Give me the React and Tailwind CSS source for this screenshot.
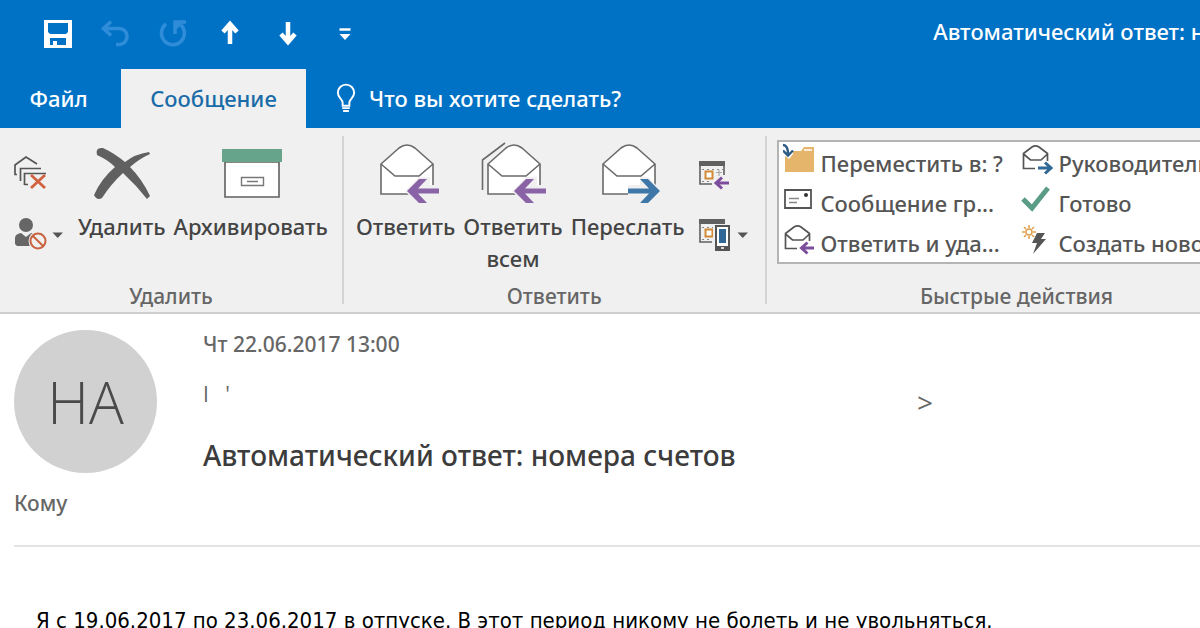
import React from 'react';

const ENVELOPE = 'M8 22 L26 6 Q34 0 42 6 L60 22 V52 H8 Z';

function Caret() {
  return (
    <svg width="12" height="7" viewBox="0 0 12 7">
      <path d="M0.5 0.5h10.5L5.7 6z" fill="#555" />
    </svg>
  );
}

function QuickButton({ label, children }) {
  return (
    <button aria-label={label} className="flex w-[58px] h-12 items-center justify-center">
      <svg width="32" height="32" viewBox="0 0 32 32" fill="none" stroke="#fff">
        {children}
      </svg>
    </button>
  );
}

function BigButton({ icon, children }) {
  return (
    <button className="flex flex-col items-center gap-1">
      <svg width="66" height="64" viewBox="0 0 66 64" fill="none">
        {icon}
      </svg>
      <span className="whitespace-pre-line text-center leading-8">{children}</span>
    </button>
  );
}

function LargeEnvelope({ forward, all }) {
  return (
    <>
      {all && <path d="M2.5 48V18L25 1" stroke="#6a6a6a" strokeWidth="1.6" />}
      <path d={ENVELOPE} fill="#fff" stroke="#6a6a6a" strokeWidth="1.6" />
      <path d="M8 22l14 12h24l14-12" stroke="#6a6a6a" strokeWidth="1.6" />
      {forward ? (
        <>
          <path d="M33 43h12V35h8l14 14-14 15h-8V55H33z" fill="#f0f0f0" />
          <path d="M33 46.5h21l-9-9.5h8l12 12-12 12h-8l9-9.5H33z" fill="#3f78a8" />
        </>
      ) : (
        <>
          <path d="M66 43h-9V35H46L32 49l14 15h10V56h10z" fill="#f0f0f0" />
          <path d="M66 46.5H45l9-9.5h-8L34 49l12 12h8l-9-9.5h21z" fill="#8a62a6" />
        </>
      )}
    </>
  );
}

function CalendarGrid() {
  return (
    <>
      <path d="M2 1h26v5H2z" fill="#606060" />
      <path d="M3 6v18h12M27 6v9" stroke="#606060" strokeWidth="1.6" />
      <path d="M5 9.5h21M5 21.5h10" stroke="#888" strokeWidth="1.2" strokeDasharray="2 3" />
      <rect x="8.5" y="11.5" width="7" height="7" stroke="#d08a35" strokeWidth="2" fill="#fff" />
      <path d="M19 12.5h6M22 10v6" stroke="#aaa" strokeWidth="1.2" />
    </>
  );
}

function Group({ title, className = '', children }) {
  return (
    <section aria-label={title} className={`flex shrink-0 flex-col justify-between ${className}`}>
      <div className="flex">{children}</div>
      <h2 className="text-center text-[21px] leading-4 text-[#666]">{title}</h2>
    </section>
  );
}

function QuickStep({ icon, children }) {
  return (
    <button className="flex h-10 items-center gap-1.5 pl-1 pt-0.5 text-left">
      <svg width="32" height="32" viewBox="0 0 32 32" fill="none" className="-mt-2 shrink-0">
        {icon}
      </svg>
      <span className="whitespace-nowrap">{children}</span>
    </button>
  );
}

function SmallEnvelope({ forward }) {
  return (
    <>
      <path d="M14 25.5H2.5V10.5L11 4q3.5-2.4 7 0l8.5 6.5V18M2.5 11l7 6H20l6.5-6" stroke="#555" strokeWidth="1.7" />
      {forward ? (
        <path d="M17 25h12M24 19.5l6 5.5-6 5.5" stroke="#2f6797" strokeWidth="3" />
      ) : (
        <path d="M31 25H19M24.5 19.5L18.5 25l6 5.5" stroke="#7c4d9c" strokeWidth="3" />
      )}
    </>
  );
}

function TitleBar() {
  return (
    <div className="grid grid-cols-[7fr_2fr] items-center py-[9px]">
      <div className="flex pl-7">
        <QuickButton label="Сохранить">
          <path d="M3 3h28v28H3z M7 6v9l2 2h16l2-2V6z M9 21v7h3v-4h4v4h9v-7z" fill="#fff" fillRule="evenodd" stroke="none" />
        </QuickButton>
        <QuickButton label="Отменить">
          <path d="M12 4.5L4.5 11.5 12 18.5M5 11.5h14a8 8 0 0 1 2 16h-4" stroke="#2f8cd8" strokeWidth="3.5" />
        </QuickButton>
        <QuickButton label="Повторить">
          <path d="M9 7A11.5 11.5 0 1 0 24 8" stroke="#2f8cd8" strokeWidth="3.5" />
          <path d="M18 17V5h11" stroke="#2f8cd8" strokeWidth="3.5" />
          <path d="M18 5h9l-9 9z" fill="#2f8cd8" stroke="none" />
        </QuickButton>
        <QuickButton label="Предыдущий элемент">
          <path d="M15 27V8M8 15l7-8 7 8" strokeWidth="4.5" />
        </QuickButton>
        <QuickButton label="Следующий элемент">
          <path d="M15 5v19M8 17l7 8 7-8" strokeWidth="4.5" />
        </QuickButton>
        <QuickButton label="Настройка панели быстрого доступа">
          <path d="M8.5 12.5h11" strokeWidth="2.5" />
          <path d="M8.5 17h11L14 23z" fill="#fff" stroke="none" />
        </QuickButton>
      </div>
      <h1 className="-mt-1 overflow-hidden whitespace-nowrap">
        Автоматический ответ: номера счетов
      </h1>
    </div>
  );
}

function Tabs() {
  return (
    <nav className="flex h-[62px] items-end">
      <button className="h-[59px] w-[117px] text-center">Файл</button>
      <button className="ml-1 h-[59px] w-[185px] bg-[#f0f0f0] text-[#1a6ca8]">Сообщение</button>
      <label className="ml-7 flex h-[59px] flex-1 items-center gap-3">
        <svg width="24" height="32" viewBox="0 0 24 32" fill="none" stroke="#fff" strokeWidth="2">
          <path d="M9 23v-3c0-4-5-5-5-10.5a8.5 8.5 0 0 1 17 0C21 15 16 16 16 20v3zM8.5 25.5h8M9.5 28.5h6" />
        </svg>
        <input
          type="text"
          aria-label="Что вы хотите сделать?"
          placeholder="Что вы хотите сделать?"
          className="w-full bg-transparent outline-none placeholder:text-white"
        />
      </label>
    </nav>
  );
}

function Ribbon() {
  return (
    <div className="flex h-[186px] overflow-hidden border-b-2 border-[#cfcfcf] bg-[#f0f0f0] pt-2 text-[#444]">
      <Group title="Удалить" className="mb-2 border-r-2 border-[#d4d4d4] px-3.5">
        <div className="mr-3.5 mt-5 flex w-[50px] flex-col gap-7">
          <button aria-label="Пропустить">
            <svg width="34" height="34" viewBox="0 0 34 34" fill="none" stroke="#555" strokeWidth="1.7">
              <path d="M3 18.5h-2V9L12 1l11 7M6.5 25V12.5H27M10.5 28.5H14M10.5 29V17.5H32" />
              <path d="M17 19l14 13M31 19L17 32" stroke="#d2623f" strokeWidth="2.8" />
            </svg>
          </button>
          <button aria-label="Нежелательная почта" className="flex items-center justify-between">
            <svg width="34" height="34" viewBox="0 0 34 34" fill="none">
              <circle cx="12" cy="7" r="7" fill="#666" />
              <path d="M1 26V20q0-4 6-5l5 4 5-4q5 1 6 5l-7 8H3z" fill="#666" />
              <circle cx="24" cy="23" r="9.5" fill="#f0f0f0" />
              <circle cx="24" cy="23" r="7.5" stroke="#c8623f" strokeWidth="2" />
              <path d="M18.5 17.5l11 11" stroke="#c8623f" strokeWidth="2" />
            </svg>
            <Caret />
          </button>
        </div>
        <div className="flex items-start gap-2 pt-1.5">
          <BigButton
            icon={
              <path
                d="M14 6Q25 11 36 20Q46 12 60 10L61 12Q50 17 41 25Q53 37 61 54L58 57Q47 43 34 31Q22 42 13 56Q8 59 5 53Q12 37 26 25Q19 18 8 13Q6 5 14 6z"
                fill="#606060"
              />
            }
          >
            Удалить
          </BigButton>
          <BigButton
            icon={
              <>
                <path d="M7 20h54v35H7z" fill="#fff" stroke="#606060" strokeWidth="1.6" />
                <path d="M4 7h60v13H4z" fill="#66a48b" />
                <path d="M23.5 35.5h22v8h-22zM29 39.5h11" stroke="#777" strokeWidth="1.4" />
              </>
            }
          >
            Архивировать
          </BigButton>
        </div>
      </Group>

      <Group title="Ответить" className="mb-2 border-r-2 border-[#d4d4d4] px-3">
        <div className="flex items-start gap-2 pt-1.5">
          <BigButton icon={<LargeEnvelope />}>Ответить</BigButton>
          <BigButton icon={<LargeEnvelope all />}>{'Ответить\nвсем'}</BigButton>
          <BigButton icon={<LargeEnvelope forward />}>Переслать</BigButton>
        </div>
        <div className="ml-3 mr-1 mt-6 flex w-[52px] flex-col gap-6">
          <button aria-label="Собрание">
            <svg width="34" height="34" viewBox="0 0 34 34" fill="none">
              <CalendarGrid />
              <path d="M32 23H20M25 17.5L19 23l6 5.5" stroke="#7c4d9c" strokeWidth="3" />
            </svg>
          </button>
          <button aria-label="Дополнительно" className="flex items-center justify-between">
            <svg width="34" height="34" viewBox="0 0 34 34" fill="none">
              <CalendarGrid />
              <rect x="16" y="6" width="18" height="28" fill="#f0f0f0" />
              <rect x="19" y="8" width="13" height="24" fill="#fff" stroke="#555" strokeWidth="2" />
              <path d="M22 11h7v14h-7z" fill="#2f6797" />
              <path d="M19 28h13v4H19z" fill="#555" />
              <path d="M24 30h3" stroke="#fff" strokeWidth="1.5" />
            </svg>
            <Caret />
          </button>
        </div>
      </Group>

      <Group title="Быстрые действия" className="mb-2 min-w-[500px] px-2.5">
        <div className="mt-1 grid flex-1 grid-flow-col grid-cols-2 grid-rows-3 border-2 border-[#b4b4b4] bg-white text-[#555]">
          <QuickStep
            icon={
              <>
                <path d="M2 8h16l3-4h10v25H2z" fill="#e5b56c" />
                <path d="M21 7h8" stroke="#fff" strokeWidth="1.5" />
                <path d="M0 0h10v11l-4 5-6-5z" fill="#fff" />
                <path d="M0 2q5 0 5 9M0 7.5l5 5 5-5" stroke="#2d5b85" strokeWidth="2.4" />
              </>
            }
          >
            Переместить в: ?
          </QuickStep>
          <QuickStep
            icon={
              <>
                <path d="M2 7h26v18H2z" stroke="#555" strokeWidth="1.8" />
                <path d="M6 15.5h10M6 19.5h8" stroke="#888" strokeWidth="1.4" />
                <circle cx="23" cy="12" r="2" fill="#333" />
              </>
            }
          >
            Сообщение гр...
          </QuickStep>
          <QuickStep icon={<SmallEnvelope />}>Ответить и уда...</QuickStep>
          <QuickStep icon={<SmallEnvelope forward />}>Руководителю</QuickStep>
          <QuickStep icon={<path d="M2 16l9 9L27 5" stroke="#5b9c86" strokeWidth="5" />}>Готово</QuickStep>
          <QuickStep
            icon={
              <>
                <circle cx="8" cy="9" r="3" stroke="#dfa04a" strokeWidth="1.5" />
                <path d="M8 2v3M8 13v3M1 9h3M12 9h3M3 4l2 2M11 12l2 2M13 4l-2 2M3 14l2-2" stroke="#dfa04a" strokeWidth="1.5" />
                <path d="M16 10h8l-4 6h5L12 31l4-11h-5z" fill="#555" />
              </>
            }
          >
            Создать новое
          </QuickStep>
        </div>
      </Group>
    </div>
  );
}

function Message() {
  return (
    <main className="bg-white pl-3.5 text-[21px] text-[#666]">
      <header className="border-b-2 border-[#e4e4e4] pb-7 pt-4">
        <div className="flex gap-[46px]">
          <div className="flex size-[143px] shrink-0 items-center justify-center rounded-full bg-[#d1d1d1] font-['Open_Sans'] text-[58px] font-light text-[#4a4a4a]">
            НА
          </div>
          <div className="flex min-w-0 flex-1 flex-col justify-between">
            <time className="leading-7">Чт 22.06.2017 13:00</time>
            <div className="flex h-10 items-start font-['Open_Sans'] leading-8">
              <span className="w-[714px] whitespace-pre">I   '</span>
              <span className="self-end text-[28px] leading-8">&gt;</span>
            </div>
            <h2 className="text-[28px] leading-9 text-[#3c3c3c]">Автоматический ответ: номера счетов</h2>
          </div>
        </div>
        <p className="mt-4 leading-7">Кому</p>
      </header>
      <p className="pl-[22px] pt-[60px] font-['DejaVu_Sans_Condensed','DejaVu_Sans',sans-serif] text-[22px] leading-7 text-black">
        Я с 19.06.2017 по 23.06.2017 в отпуске. В этот период никому не болеть и не увольняться.
      </p>
    </main>
  );
}

export default function App() {
  return (
    <div className="h-screen overflow-hidden bg-white font-['Noto_Sans','Open_Sans',sans-serif] text-[22px] font-medium">
      <div className="bg-[#0072c6] text-white">
        <TitleBar />
        <Tabs />
      </div>
      <Ribbon />
      <Message />
    </div>
  );
}
